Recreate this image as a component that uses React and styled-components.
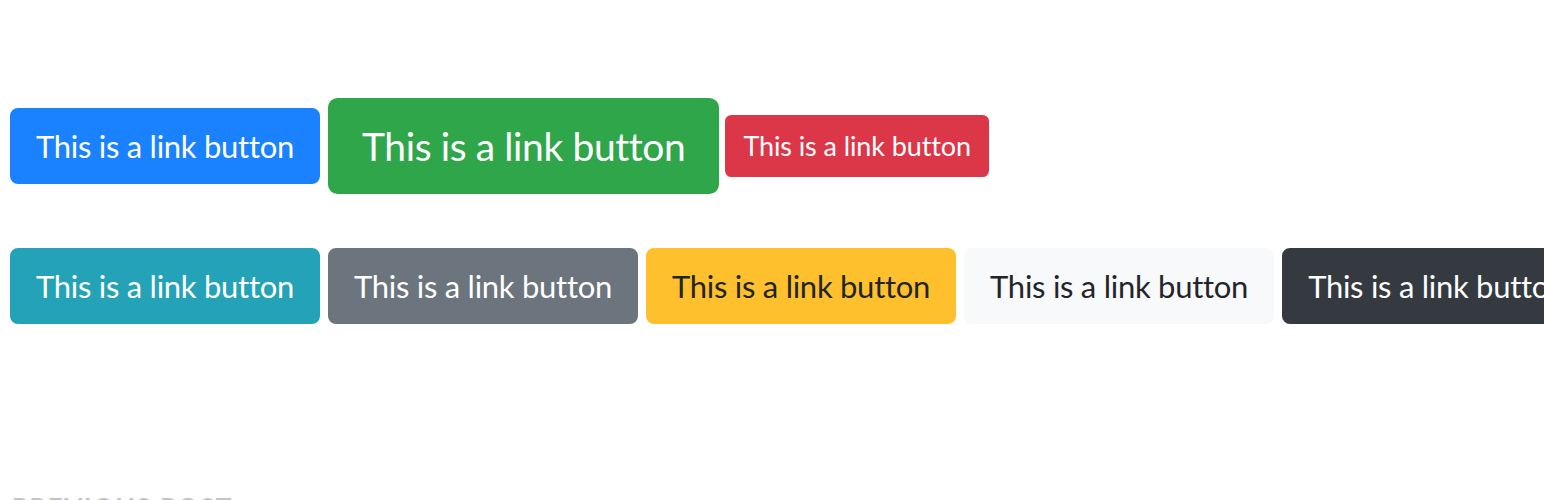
import React from "react";
import styled, { createGlobalStyle, css } from "styled-components";

const GlobalStyle = createGlobalStyle`
  html, body {
    margin: 0;
    padding: 0;
    background: #ffffff;
    overflow: hidden;
  }
  body {
    font-family: Lato, "Open Sans", "Liberation Sans", sans-serif;
  }
`;

const Page = styled.div`
  padding: 98px 0 0 10px;
  display: flex;
  flex-direction: column;
`;

const Row = styled.div`
  display: flex;
  align-items: center;
  gap: 8px;
  white-space: nowrap;
  min-height: ${(p) => p.$h}px;
  margin-top: ${(p) => p.$mt || 0}px;
`;

const sizes = {
  md: css`
    font-size: 31px;
    letter-spacing: -0.27px;
    padding: 12px 24px;
    line-height: 48px;
    border-radius: 8px;
  `,
  lg: css`
    font-size: 39px;
    letter-spacing: -0.4px;
    padding: 16px 32px;
    line-height: 60px;
    border-radius: 9.6px;
  `,
  sm: css`
    font-size: 27px;
    letter-spacing: -0.1px;
    padding: 8px 16px;
    line-height: 42px;
    border-radius: 6.4px;
  `,
};

const Button = styled.a`
  display: inline-block;
  flex-shrink: 0;
  box-sizing: border-box;
  border: 2px solid ${(p) => p.$bg};
  background: ${(p) => p.$bg};
  color: ${(p) => p.$fg};
  font-weight: 400;
  text-align: center;
  text-decoration: none;
  cursor: pointer;
  margin-left: ${(p) => (p.$tight ? -2 : 0)}px;
  ${(p) => sizes[p.$size || "md"]}
`;

const Footer = styled.div`
  margin-top: 164px;
  padding-left: 2px;
  font-size: 26px;
  line-height: 39px;
  font-weight: 700;
  letter-spacing: 1.5px;
  text-transform: uppercase;
  color: #c4c4c4;
`;

const label = "This is a link button";

export default function App() {
  return (
    <>
      <GlobalStyle />
      <Page>
        <Row $h={96}>
          <Button href="#" $bg="#1a82ff" $fg="#fff">{label}</Button>
          <Button href="#" $size="lg" $bg="#30a64a" $fg="#fff">{label}</Button>
          <Button href="#" $size="sm" $tight $bg="#dc3749" $fg="#fff">{label}</Button>
        </Row>
        <Row $h={76} $mt={54}>
          <Button href="#" $bg="#24a2b8" $fg="#fff">{label}</Button>
          <Button href="#" $bg="#6c757d" $fg="#fff">{label}</Button>
          <Button href="#" $bg="#ffc02e" $fg="#212529">{label}</Button>
          <Button href="#" $bg="#f8f9fa" $fg="#212529">{label}</Button>
          <Button href="#" $bg="#343a40" $fg="#fff">{label}</Button>
        </Row>
        <Footer>Previous Post</Footer>
      </Page>
    </>
  );
}
